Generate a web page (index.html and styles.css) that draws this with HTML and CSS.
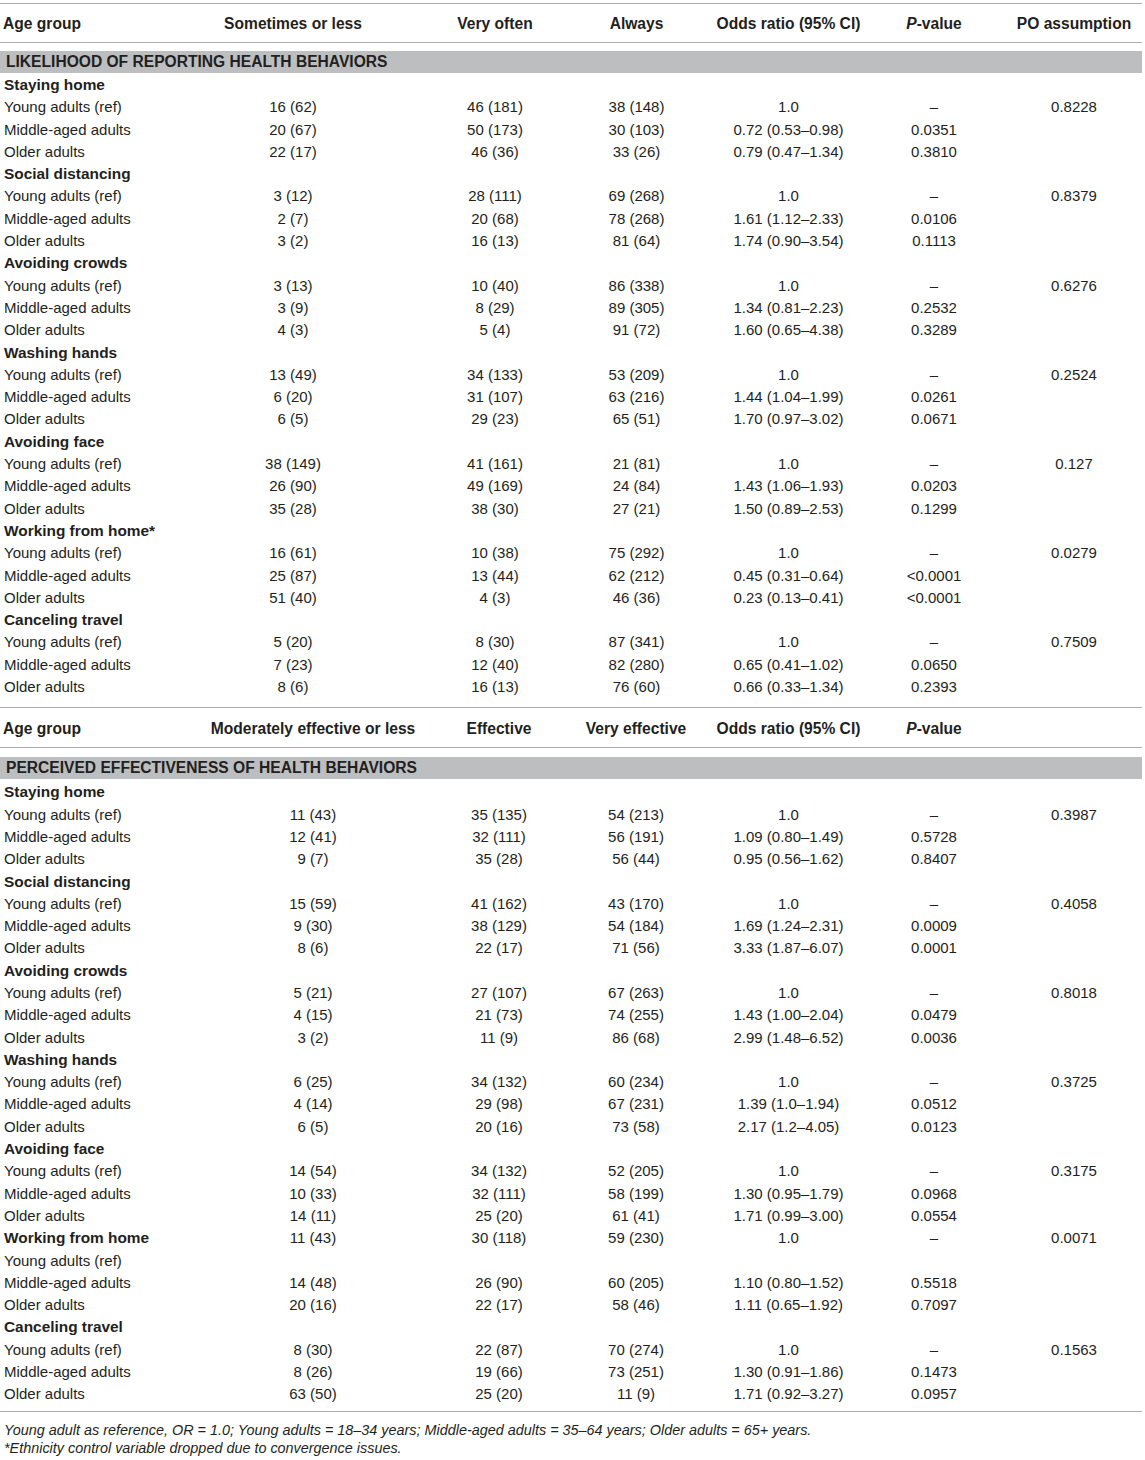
FILE: index.html
```html
<!DOCTYPE html>
<html lang="en">
<head>
<meta charset="utf-8">
<title>Health behaviors by age group</title>
<link rel="stylesheet" href="styles.css">
</head>
<body>
<div class="page">
  <section class="block b1">
    <div class="row head"><span>Age group</span><span>Sometimes or less</span><span>Very often</span><span>Always</span><span>Odds ratio (95% CI)</span><span><i>P</i>-value</span><span>PO assumption</span></div>
    <div class="band">LIKELIHOOD OF REPORTING HEALTH BEHAVIORS</div>

    <div class="row group"><span>Staying home</span></div>
    <div class="row"><span>Young adults (ref)</span><span>16 (62)</span><span>46 (181)</span><span>38 (148)</span><span>1.0</span><span>–</span><span>0.8228</span></div>
    <div class="row"><span>Middle-aged adults</span><span>20 (67)</span><span>50 (173)</span><span>30 (103)</span><span>0.72 (0.53–0.98)</span><span>0.0351</span><span></span></div>
    <div class="row"><span>Older adults</span><span>22 (17)</span><span>46 (36)</span><span>33 (26)</span><span>0.79 (0.47–1.34)</span><span>0.3810</span><span></span></div>

    <div class="row group"><span>Social distancing</span></div>
    <div class="row"><span>Young adults (ref)</span><span>3 (12)</span><span>28 (111)</span><span>69 (268)</span><span>1.0</span><span>–</span><span>0.8379</span></div>
    <div class="row"><span>Middle-aged adults</span><span>2 (7)</span><span>20 (68)</span><span>78 (268)</span><span>1.61 (1.12–2.33)</span><span>0.0106</span><span></span></div>
    <div class="row"><span>Older adults</span><span>3 (2)</span><span>16 (13)</span><span>81 (64)</span><span>1.74 (0.90–3.54)</span><span>0.1113</span><span></span></div>

    <div class="row group"><span>Avoiding crowds</span></div>
    <div class="row"><span>Young adults (ref)</span><span>3 (13)</span><span>10 (40)</span><span>86 (338)</span><span>1.0</span><span>–</span><span>0.6276</span></div>
    <div class="row"><span>Middle-aged adults</span><span>3 (9)</span><span>8 (29)</span><span>89 (305)</span><span>1.34 (0.81–2.23)</span><span>0.2532</span><span></span></div>
    <div class="row"><span>Older adults</span><span>4 (3)</span><span>5 (4)</span><span>91 (72)</span><span>1.60 (0.65–4.38)</span><span>0.3289</span><span></span></div>

    <div class="row group"><span>Washing hands</span></div>
    <div class="row"><span>Young adults (ref)</span><span>13 (49)</span><span>34 (133)</span><span>53 (209)</span><span>1.0</span><span>–</span><span>0.2524</span></div>
    <div class="row"><span>Middle-aged adults</span><span>6 (20)</span><span>31 (107)</span><span>63 (216)</span><span>1.44 (1.04–1.99)</span><span>0.0261</span><span></span></div>
    <div class="row"><span>Older adults</span><span>6 (5)</span><span>29 (23)</span><span>65 (51)</span><span>1.70 (0.97–3.02)</span><span>0.0671</span><span></span></div>

    <div class="row group"><span>Avoiding face</span></div>
    <div class="row"><span>Young adults (ref)</span><span>38 (149)</span><span>41 (161)</span><span>21 (81)</span><span>1.0</span><span>–</span><span>0.127</span></div>
    <div class="row"><span>Middle-aged adults</span><span>26 (90)</span><span>49 (169)</span><span>24 (84)</span><span>1.43 (1.06–1.93)</span><span>0.0203</span><span></span></div>
    <div class="row"><span>Older adults</span><span>35 (28)</span><span>38 (30)</span><span>27 (21)</span><span>1.50 (0.89–2.53)</span><span>0.1299</span><span></span></div>

    <div class="row group"><span>Working from home*</span></div>
    <div class="row"><span>Young adults (ref)</span><span>16 (61)</span><span>10 (38)</span><span>75 (292)</span><span>1.0</span><span>–</span><span>0.0279</span></div>
    <div class="row"><span>Middle-aged adults</span><span>25 (87)</span><span>13 (44)</span><span>62 (212)</span><span>0.45 (0.31–0.64)</span><span>&lt;0.0001</span><span></span></div>
    <div class="row"><span>Older adults</span><span>51 (40)</span><span>4 (3)</span><span>46 (36)</span><span>0.23 (0.13–0.41)</span><span>&lt;0.0001</span><span></span></div>

    <div class="row group"><span>Canceling travel</span></div>
    <div class="row"><span>Young adults (ref)</span><span>5 (20)</span><span>8 (30)</span><span>87 (341)</span><span>1.0</span><span>–</span><span>0.7509</span></div>
    <div class="row"><span>Middle-aged adults</span><span>7 (23)</span><span>12 (40)</span><span>82 (280)</span><span>0.65 (0.41–1.02)</span><span>0.0650</span><span></span></div>
    <div class="row"><span>Older adults</span><span>8 (6)</span><span>16 (13)</span><span>76 (60)</span><span>0.66 (0.33–1.34)</span><span>0.2393</span><span></span></div>
  </section>

  <section class="block b2">
    <div class="row head"><span>Age group</span><span>Moderately effective or less</span><span>Effective</span><span>Very effective</span><span>Odds ratio (95% CI)</span><span><i>P</i>-value</span><span></span></div>
    <div class="band">PERCEIVED EFFECTIVENESS OF HEALTH BEHAVIORS</div>

    <div class="row group"><span>Staying home</span></div>
    <div class="row"><span>Young adults (ref)</span><span>11 (43)</span><span>35 (135)</span><span>54 (213)</span><span>1.0</span><span>–</span><span>0.3987</span></div>
    <div class="row"><span>Middle-aged adults</span><span>12 (41)</span><span>32 (111)</span><span>56 (191)</span><span>1.09 (0.80–1.49)</span><span>0.5728</span><span></span></div>
    <div class="row"><span>Older adults</span><span>9 (7)</span><span>35 (28)</span><span>56 (44)</span><span>0.95 (0.56–1.62)</span><span>0.8407</span><span></span></div>

    <div class="row group"><span>Social distancing</span></div>
    <div class="row"><span>Young adults (ref)</span><span>15 (59)</span><span>41 (162)</span><span>43 (170)</span><span>1.0</span><span>–</span><span>0.4058</span></div>
    <div class="row"><span>Middle-aged adults</span><span>9 (30)</span><span>38 (129)</span><span>54 (184)</span><span>1.69 (1.24–2.31)</span><span>0.0009</span><span></span></div>
    <div class="row"><span>Older adults</span><span>8 (6)</span><span>22 (17)</span><span>71 (56)</span><span>3.33 (1.87–6.07)</span><span>0.0001</span><span></span></div>

    <div class="row group"><span>Avoiding crowds</span></div>
    <div class="row"><span>Young adults (ref)</span><span>5 (21)</span><span>27 (107)</span><span>67 (263)</span><span>1.0</span><span>–</span><span>0.8018</span></div>
    <div class="row"><span>Middle-aged adults</span><span>4 (15)</span><span>21 (73)</span><span>74 (255)</span><span>1.43 (1.00–2.04)</span><span>0.0479</span><span></span></div>
    <div class="row"><span>Older adults</span><span>3 (2)</span><span>11 (9)</span><span>86 (68)</span><span>2.99 (1.48–6.52)</span><span>0.0036</span><span></span></div>

    <div class="row group"><span>Washing hands</span></div>
    <div class="row"><span>Young adults (ref)</span><span>6 (25)</span><span>34 (132)</span><span>60 (234)</span><span>1.0</span><span>–</span><span>0.3725</span></div>
    <div class="row"><span>Middle-aged adults</span><span>4 (14)</span><span>29 (98)</span><span>67 (231)</span><span>1.39 (1.0–1.94)</span><span>0.0512</span><span></span></div>
    <div class="row"><span>Older adults</span><span>6 (5)</span><span>20 (16)</span><span>73 (58)</span><span>2.17 (1.2–4.05)</span><span>0.0123</span><span></span></div>

    <div class="row group"><span>Avoiding face</span></div>
    <div class="row"><span>Young adults (ref)</span><span>14 (54)</span><span>34 (132)</span><span>52 (205)</span><span>1.0</span><span>–</span><span>0.3175</span></div>
    <div class="row"><span>Middle-aged adults</span><span>10 (33)</span><span>32 (111)</span><span>58 (199)</span><span>1.30 (0.95–1.79)</span><span>0.0968</span><span></span></div>
    <div class="row"><span>Older adults</span><span>14 (11)</span><span>25 (20)</span><span>61 (41)</span><span>1.71 (0.99–3.00)</span><span>0.0554</span><span></span></div>

    <div class="row group"><span>Working from home</span><span>11 (43)</span><span>30 (118)</span><span>59 (230)</span><span>1.0</span><span>–</span><span>0.0071</span></div>
    <div class="row"><span>Young adults (ref)</span></div>
    <div class="row"><span>Middle-aged adults</span><span>14 (48)</span><span>26 (90)</span><span>60 (205)</span><span>1.10 (0.80–1.52)</span><span>0.5518</span><span></span></div>
    <div class="row"><span>Older adults</span><span>20 (16)</span><span>22 (17)</span><span>58 (46)</span><span>1.11 (0.65–1.92)</span><span>0.7097</span><span></span></div>

    <div class="row group"><span>Canceling travel</span></div>
    <div class="row"><span>Young adults (ref)</span><span>8 (30)</span><span>22 (87)</span><span>70 (274)</span><span>1.0</span><span>–</span><span>0.1563</span></div>
    <div class="row"><span>Middle-aged adults</span><span>8 (26)</span><span>19 (66)</span><span>73 (251)</span><span>1.30 (0.91–1.86)</span><span>0.1473</span><span></span></div>
    <div class="row"><span>Older adults</span><span>63 (50)</span><span>25 (20)</span><span>11 (9)</span><span>1.71 (0.92–3.27)</span><span>0.0957</span><span></span></div>
  </section>

  <footer class="notes">
    <p>Young adult as reference, OR = 1.0; Young adults = 18–34 years; Middle-aged adults = 35–64 years; Older adults = 65+ years.</p>
    <p>*Ethnicity control variable dropped due to convergence issues.</p>
  </footer>
</div>
</body>
</html>
```

FILE: styles.css
```css
html, body {
  margin: 0;
  padding: 0;
  background: #ffffff;
}

body {
  font-family: "Liberation Sans", Arial, Helvetica, sans-serif;
  font-size: 15px;
  color: #231f20;
}

.page {
  width: 1142px;
  padding-top: 3px;
}

.block {
  width: 1142px;
}

.b2 {
  margin-top: 9px;
}

.row {
  display: grid;
  height: 22.3px;
  line-height: 22.3px;
}

.b1 .row {
  grid-template-columns: 154px 278px 126px 157px 147px 144px 136px;
}

.b2 .row {
  grid-template-columns: 185px 256px 116px 158px 147px 144px 136px;
}

.row > span {
  text-align: center;
  white-space: nowrap;
}

.row > span:first-child {
  text-align: left;
  padding-left: 4px;
}

.row.head {
  height: 38px;
  line-height: 39px;
  border-top: 1px solid #adadad;
  border-bottom: 1px solid #adadad;
  font-weight: bold;
  font-size: 15.6px;
}

.b2 .row.head {
  height: 39px;
  line-height: 42px;
}

.row.head > span:first-child {
  padding-left: 3px;
}

.row.group > span:first-child {
  font-weight: bold;
  font-size: 15.4px;
}

.band {
  height: 22px;
  line-height: 22px;
  background: #bcbec0;
  font-weight: bold;
  font-size: 15.6px;
  padding-left: 6px;
}

.b1 .band {
  margin: 8px 0 1px;
}

.b2 .band {
  margin: 9px 0 2px;
}

.notes {
  margin-top: 5px;
  border-top: 1px solid #adadad;
  padding-top: 9px;
  font-size: 14.4px;
  font-style: italic;
}

.notes p {
  margin: 0;
  padding-left: 4px;
  line-height: 18px;
}
```
